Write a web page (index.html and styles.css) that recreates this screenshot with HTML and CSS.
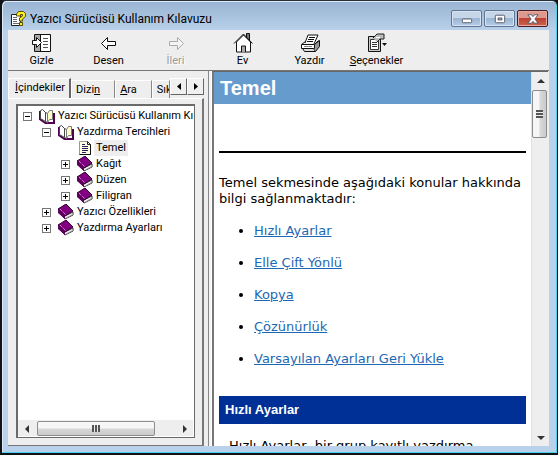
FILE: index.html
```html
<!DOCTYPE html>
<html lang="tr">
<head>
<meta charset="utf-8">
<meta name="viewport" content="width=device-width, initial-scale=1">
<title>Yazıcı Sürücüsü Kullanım Kılavuzu</title>
<link rel="stylesheet" href="styles.css">
</head>
<body>
<svg class="sprites" aria-hidden="true">
  <symbol id="open-book" viewBox="0 0 16 16">
    <path d="M0.500 3v8l6 4h8.500V5" fill="none" stroke="#500050" stroke-width="2"/>
    <path d="M1.500 2.500l2-1 3 3v9l-5-3z" fill="#fff" stroke="#444"/>
    <path d="M6.500 4.500l2 1v9l-2-1z" fill="#fff" stroke="#444"/>
    <path d="M8.500 5.500l2-3h3v9l-3 0-2 3z" fill="#ffffc8" stroke="#777"/>
  </symbol>
  <symbol id="closed-book" viewBox="0 0 16 16">
    <path d="M7 12l8-4v3l-8 4-6-6V7z" fill="#fff" stroke="#333"/>
    <path d="M0 5l8-5 7 7-8 5z" fill="#800080" stroke="#300030"/>
    <path d="M0 5v4l7 6v-3z" fill="#600060"/>
    <path d="M2 5l6 6" stroke="#e6b8e6" stroke-dasharray="1 1"/>
    <path d="M8 14l7-4" stroke="#aaa"/>
  </symbol>
  <symbol id="topic" viewBox="0 0 16 16">
    <path d="M2.500 1.500h8l3 3v10h-11z" fill="#ffffe1" stroke="#999"/>
    <path d="M13.500 4.500v10h-11" fill="none" stroke="#111"/>
    <path d="M10.500 1.500v3h3z" fill="#fff" stroke="#222"/>
    <path d="M5 4.500h3M5 6.500h6M5 8.500h6M5 10.500h6M5 12.500h4" stroke="#226"/>
  </symbol>
</svg>
<div class="window">
  <header class="titlebar">
    <svg class="app-icon" viewBox="0 0 16 16" aria-hidden="true">
      <path d="M1.500 3.500h9v11h-9z" fill="#fff" stroke="#222"/>
      <path d="M3 6.500h4M3 8.500h4M3 10.500h4M3 12.500h6" stroke="#667"/>
      <path d="M6.500 5V3l2-2.500h5l2 2v3l-3 2.500v2h-3V7l3-2V3.500h-2V5z" fill="#ffee22" stroke="#554d00"/>
      <path d="M9.500 11.500h3v3h-3z" fill="#ffee22" stroke="#554d00"/>
    </svg>
    <h1 class="caption">Yazıcı Sürücüsü Kullanım Kılavuzu</h1>
    <div class="window-buttons">
      <button class="window-button" aria-label="Simge durumuna küçült"><svg viewBox="0 0 30 16"><rect x="10.500" y="8.500" width="10" height="4" rx="1" fill="#fff" stroke="#535666"/></svg></button>
      <button class="window-button" aria-label="Ekranı kapla"><svg viewBox="0 0 30 16"><rect x="10.500" y="4.500" width="10" height="8" rx="1" fill="#fff" stroke="#535666"/><rect x="13.500" y="7.500" width="4" height="2" fill="#9db8d6" stroke="#535666"/></svg></button>
      <button class="window-button close" aria-label="Kapat"><svg viewBox="0 0 30 16"><path d="M10 4h4l1.500 2L17 4h4l-3.500 4.500L21 13h-4l-1.500-2L14 13h-4l3.500-4.500z" fill="#fff" stroke="#535666"/></svg></button>
    </div>
  </header>

  <nav class="toolbar" aria-label="Araç çubuğu">
    <button class="tool">
      <svg viewBox="0 0 20 20"><path d="M2.500 1.500h16v17h-16z" fill="#fff" stroke="#111"/><path d="M3 2h5v16H3z" fill="#aaa"/><path d="M8.500 2v16" stroke="#111"/><path d="M11 5.500h5M11 8.500h5M11 11.500h5M11 14.500h5" stroke="#555"/><path d="M0.500 7.500h4v-3l5 5-5 5v-3h-4z" fill="#fff" stroke="#111"/></svg>
      <span>Gizle</span>
    </button>
    <button class="tool">
      <svg viewBox="0 0 20 20"><path d="M2.500 10.500l6-6v4h8v4h-8v4z" fill="#fff" stroke="#111"/></svg>
      <span>Desen</span>
    </button>
    <button class="tool" disabled>
      <svg viewBox="0 0 20 20"><path d="M17.500 10.500l-6-6v4h-8v4h8v4z" fill="#f4f4f4" stroke="#aaa"/></svg>
      <span>İleri</span>
    </button>
    <button class="tool">
      <svg viewBox="0 0 20 20"><path d="M13.500 5V0.500h3V8" fill="#777" stroke="#111"/><path d="M3.500 9v10h14V9l-7-7z" fill="#fff" stroke="#111"/><path d="M1 10.500L10.500 1l9 9.500" fill="none" stroke="#111"/><path d="M8.500 19v-6h4v6" fill="#aaa" stroke="#111"/></svg>
      <span>Ev</span>
    </button>
    <button class="tool">
      <svg viewBox="0 0 20 20"><path d="M5 10l3-8h10l-4 9" fill="#fff" stroke="#111"/><path d="M9 4.500h6M8 6.500h6M7 8.500h6" stroke="#111"/><path d="M1.500 11.500l4-3M14.500 11.500l4-4" stroke="#111"/><path d="M14.500 11.500l5-4v6l-4 5" fill="#999" stroke="#111"/><path d="M1.500 11.500h13v4h-13z" fill="#fff" stroke="#111"/><path d="M2.500 15.500h11l2 3h-11z" fill="#ddd" stroke="#111"/><path d="M4 13.500h8" stroke="#888"/></svg>
      <span>Yazdır</span>
    </button>
    <button class="tool">
      <svg viewBox="0 0 20 20"><path d="M1.500 3.500h12v15h-12z" fill="#ccc" stroke="#111"/><path d="M3.500 6.500h8v10h-8z" fill="#fff" stroke="#333"/><path d="M5 9.500h5M5 11.500h5M5 13.500h5" stroke="#333"/><path d="M6 5l4-4h7v5h-4l-3 3" fill="#bbb" stroke="#222"/><path d="M9 4.500h4" stroke="#fff"/><path d="M15 10h5l-2.500 3z" fill="#111"/></svg>
      <span><u>S</u>eçenekler</span>
    </button>
  </nav>

  <div class="panes">
    <aside class="sidebar">
      <div class="tabs" role="tablist">
        <button class="tab active" role="tab" aria-selected="true"><u>İ</u>çindekiler</button>
        <button class="tab" role="tab">Dizi<u>n</u></button>
        <button class="tab" role="tab"><u>A</u>ra</button>
        <button class="tab last" role="tab">Sık</button>
        <div class="tab-scroll">
          <button aria-label="Önceki sekmeler"><svg viewBox="0 0 4 7"><path d="M4 0v7L0 3.500z"/></svg></button>
          <button aria-label="Sonraki sekmeler"><svg viewBox="0 0 4 7"><path d="M0 0v7l4-3.500z"/></svg></button>
        </div>
      </div>
      <div class="tab-panel" role="tabpanel">
        <div class="tree-box">
          <ul class="tree">
            <li><div class="node"><button class="toggle" aria-label="Daralt"></button><svg class="node-icon"><use href="#open-book"/></svg><span>Yazıcı Sürücüsü Kullanım Kılavuzu</span></div>
              <ul>
                <li><div class="node"><button class="toggle" aria-label="Daralt"></button><svg class="node-icon"><use href="#open-book"/></svg><span>Yazdırma Tercihleri</span></div>
                  <ul>
                    <li><div class="node"><i class="no-toggle"></i><svg class="node-icon"><use href="#topic"/></svg><span class="selected">Temel</span></div></li>
                    <li><div class="node"><button class="toggle closed" aria-label="Genişlet"></button><svg class="node-icon"><use href="#closed-book"/></svg><span>Kağıt</span></div></li>
                    <li><div class="node"><button class="toggle closed" aria-label="Genişlet"></button><svg class="node-icon"><use href="#closed-book"/></svg><span>Düzen</span></div></li>
                    <li><div class="node"><button class="toggle closed" aria-label="Genişlet"></button><svg class="node-icon"><use href="#closed-book"/></svg><span>Filigran</span></div></li>
                  </ul>
                </li>
                <li><div class="node"><button class="toggle closed" aria-label="Genişlet"></button><svg class="node-icon"><use href="#closed-book"/></svg><span>Yazıcı Özellikleri</span></div></li>
                <li><div class="node"><button class="toggle closed" aria-label="Genişlet"></button><svg class="node-icon"><use href="#closed-book"/></svg><span>Yazdırma Ayarları</span></div></li>
              </ul>
            </li>
          </ul>
          <div class="scrollbar horizontal">
            <button class="arrow" aria-label="Sola kaydır"><svg viewBox="0 0 4 8"><path d="M4 0v8L0 4z"/></svg></button>
            <div class="track"><div class="thumb"><i class="grip"></i></div></div>
            <button class="arrow" aria-label="Sağa kaydır"><svg viewBox="0 0 4 8"><path d="M0 0v8l4-4z"/></svg></button>
          </div>
        </div>
      </div>
    </aside>
    <div class="splitter"></div>
    <main class="viewer">
      <article class="document">
        <h2 class="doc-title">Temel</h2>
        <div class="doc-body">
          <hr>
          <p class="intro">Temel sekmesinde aşağıdaki konular hakkında bilgi sağlanmaktadır:</p>
          <ul class="links">
            <li><a href="#hizli">Hızlı Ayarlar</a></li>
            <li><a href="#elle">Elle Çift Yönlü</a></li>
            <li><a href="#kopya">Kopya</a></li>
            <li><a href="#cozunurluk">Çözünürlük</a></li>
            <li><a href="#varsayilan">Varsayılan Ayarları Geri Yükle</a></li>
          </ul>
          <h3 class="section-title" id="hizli">Hızlı Ayarlar</h3>
          <p class="section-text">Hızlı Ayarlar, bir grup kayıtlı yazdırma</p>
        </div>
      </article>
      <div class="scrollbar vertical">
        <button class="arrow" aria-label="Yukarı kaydır"><svg viewBox="0 0 8 4"><path d="M0 4h8L4 0z"/></svg></button>
        <div class="track"><div class="thumb"><i class="grip"></i></div></div>
        <button class="arrow" aria-label="Aşağı kaydır"><svg viewBox="0 0 8 4"><path d="M0 0h8L4 4z"/></svg></button>
      </div>
    </main>
  </div>
</div>
</body>
</html>
```
FILE: styles.css
```css
* { box-sizing: border-box; }

body {
  margin: 0;
  height: 100vh;
  background: #101418;
  color: #000;
  font: 11px/16px Roboto, "Liberation Sans", sans-serif;
}

ul, h1, h2, h3, p { margin: 0; padding: 0; }
ul { list-style: none; }

button {
  padding: 0;
  border: 0;
  background: none;
  color: inherit;
  font: inherit;
}

.sprites { position: absolute; width: 0; height: 0; }

.window {
  display: flex;
  flex-direction: column;
  height: 100vh;
  padding: 0 8px 7px 6px;
  border: 1px solid #101418;
  border-top-color: #2c3038;
  border-left-width: 2px;
  border-bottom-width: 2px;
  border-radius: 6px 6px 0 0;
  background: linear-gradient(#98b4d2, #b9d1ea 30px);
  box-shadow: inset -1px -1px #4fd0ee, inset 1px 1px #dce9f6;
}

/* Title bar */
.titlebar {
  display: flex;
  flex: none;
  align-items: center;
  height: 29px;
  padding: 6px 1px 0 2px;
}
.app-icon { width: 16px; height: 16px; }
.caption {
  flex: 1;
  margin-left: 4px;
  font: 12px/16px Roboto, sans-serif;
}
.window-buttons { display: flex; gap: 2px; }
.window-button {
  width: 31px;
  height: 17px;
  border: 1px solid #5f7590;
  border-radius: 2px;
  background: linear-gradient(#c5d6e9 45%, #9bb5d2 50%, #b4cce6);
  box-shadow: inset 0 0 0 1px #d5e3f2;
}
.window-button svg { display: block; width: 29px; height: 15px; }
.window-button.close {
  border-color: #4d1c22;
  background: linear-gradient(#dc9a8e 45%, #be4131 50%, #cc6450);
  box-shadow: inset 0 0 0 1px #e5aaa0;
}

/* Toolbar */
.toolbar {
  display: flex;
  flex: none;
  height: 41px;
  background: #eee;
  border-bottom: 1px solid #777;
}
.tool {
  display: flex;
  flex-direction: column;
  align-items: center;
  width: 67px;
  padding-top: 3px;
}
.tool svg { width: 20px; height: 20px; }
.tool:disabled { color: #9a9a9a; text-shadow: 1px 1px #fff; }

.panes {
  display: flex;
  flex: 1;
  min-height: 0;
  background: #eee;
}

/* Contents pane */
.sidebar {
  display: flex;
  flex: none;
  flex-direction: column;
  width: 196px;
  padding-top: 7px;
}
.tabs {
  display: flex;
  flex: none;
  align-items: flex-end;
  height: 20px;
  overflow: hidden;
}
.tab {
  flex: none;
  height: 18px;
  padding: 0 14px 0 4px;
  border-top: 1px solid #fff;
  border-right: 1px solid #888;
  border-left: 1px solid #fff;
}
.tab.active {
  height: 20px;
  padding: 0 4px 2px 6px;
  border-right: 2px solid #666;
}
.tab.last { flex: 1; min-width: 0; padding: 0 0 0 4px; overflow: hidden; text-align: left; }
.tab-scroll { display: flex; flex: none; align-self: flex-start; }
.tab-scroll button {
  display: grid;
  place-items: center;
  width: 17px;
  height: 17px;
  border: 1px solid;
  border-color: #fff #666 #666 #fff;
  background: #f0f0f0;
}
.tab-scroll svg { width: 4px; height: 7px; }
.tab-panel {
  display: flex;
  flex: 1;
  min-height: 0;
  padding: 5px 7px 7px 8px;
  border: solid;
  border-width: 1px 2px 1px 0;
  border-color: #fff #777 #777 #fff;
}
.tree-box {
  display: flex;
  flex: 1;
  flex-direction: column;
  min-width: 0;
  padding: 0 1px 1px 0;
  border: 2px solid #6a6a6a;
  border-width: 2px 1px 1px 2px;
  background: #fff;
}
.tree {
  flex: 1;
  padding: 2px 0 0 5px;
  overflow: hidden;
}
.tree ul { padding-left: 19px; }
.node { display: flex; align-items: center; height: 16px; white-space: nowrap; }
.node-icon { flex: none; width: 16px; height: 16px; margin: 0 1px 0 7px; }
.node span { padding: 0 2px; }
.node .selected { background: #eee; }
.toggle, .no-toggle { flex: none; width: 9px; height: 9px; }
.toggle {
  border: 1px solid #777;
  background: linear-gradient(#000, #000) center / 5px 1px no-repeat;
}
.toggle.closed {
  background-image: linear-gradient(#000, #000), linear-gradient(#000, #000);
  background-size: 5px 1px, 1px 5px;
}

.splitter {
  flex: none;
  width: 8px;
  border-left: 4px solid #eee;
  border-right: 1px solid #fff;
  background: linear-gradient(90deg, #888 1px, #f4f4f4 1px);
}

/* Topic pane */
.viewer {
  display: flex;
  flex: 1;
  min-width: 0;
  margin-right: 1px;
  border-top: 1px solid #666;
  border-left: 2px solid #777;
  background: #fff;
}
.document {
  flex: 1;
  min-width: 0;
  overflow: hidden;
  font: 13px/16px "DejaVu Sans", Verdana, sans-serif;
}
.doc-title {
  height: 32px;
  padding-left: 6px;
  background: #659bcd;
  color: #fff;
  font: bold 20px/32px "Liberation Sans", Arial, sans-serif;
}
.doc-body { padding: 47px 5px 0 5px; }
.doc-body hr { height: 2px; margin: 0; border: 0; background: #000; }
.intro { margin-top: 22px; }
.links { margin: 16px 0 29px; padding-left: 35px; list-style: disc; }
.links li { margin-bottom: 16px; }
.links li:last-child { margin-bottom: 0; }
.links a { color: #1c68b4; }
.section-title {
  height: 28px;
  padding-left: 6px;
  background: #003096;
  color: #fff;
  font: bold 13px/28px "Liberation Sans", Arial, sans-serif;
}
.section-text { margin-top: 14px; padding-left: 10px; white-space: nowrap; }

/* Scroll bars */
.scrollbar { display: flex; flex: none; background: #eee; }
.scrollbar .arrow { display: grid; flex: none; place-items: center; width: 17px; height: 17px; }
.scrollbar .arrow svg { fill: #333; }
.scrollbar .track { display: flex; flex: 1; min-width: 0; min-height: 0; }
.scrollbar .thumb {
  display: grid;
  place-items: center;
  border: 1px solid #8d8d8d;
  border-radius: 2px;
}
.horizontal { height: 16px; }
.horizontal .arrow svg { width: 4px; height: 8px; }
.horizontal .thumb { width: 84%; margin: 1px 0 0 2px; background: linear-gradient(#f6f6f6 45%, #d8d8d8 55%, #cacaca); }
.horizontal .grip { width: 8px; height: 7px; background: repeating-linear-gradient(90deg, #555 0 2px, #eee 2px 3px); }
.vertical { flex-direction: column; width: 17px; border-left: 1px solid #e2e2e2; }
.vertical .arrow svg { width: 8px; height: 4px; }
.vertical .thumb { width: 15px; height: 48px; margin-top: 1px; background: linear-gradient(90deg, #f6f6f6 45%, #d8d8d8 55%, #cacaca); }
.vertical .grip { width: 7px; height: 8px; background: repeating-linear-gradient(#555 0 2px, #eee 2px 3px); }
```
